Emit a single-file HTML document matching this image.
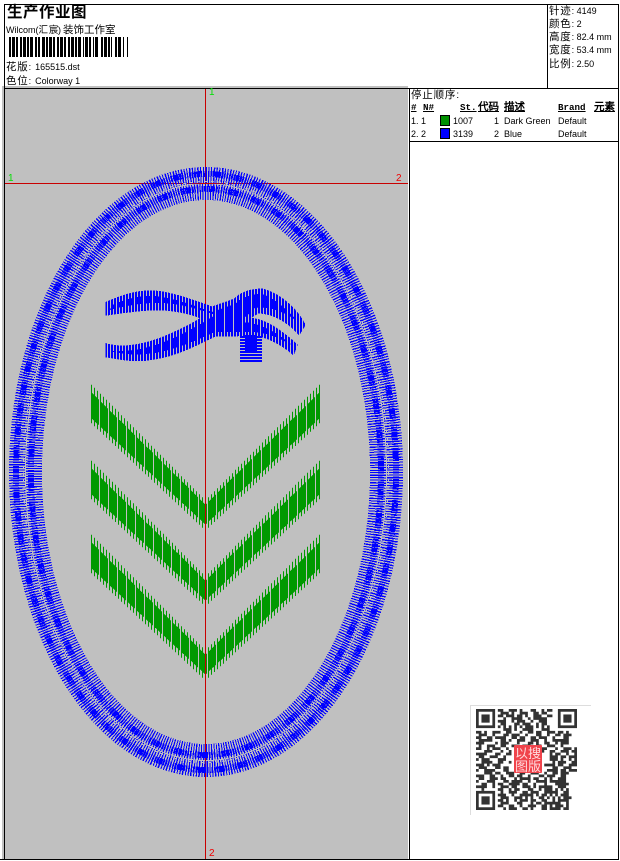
<!DOCTYPE html>
<html><head><meta charset="utf-8"><style>
html,body{margin:0;padding:0;background:#fff;width:620px;height:861px;overflow:hidden}
body{position:relative;font-family:"Liberation Sans","WenQuanYi Zen Hei","Noto Sans CJK SC",sans-serif;font-size:9px;color:#000}
.a{position:absolute;white-space:pre;line-height:12px}
.k{position:absolute;background:#000}
.c{font-size:10.5px;letter-spacing:.8px}
.h{position:absolute;white-space:pre;line-height:12px;font-family:"Liberation Mono","WenQuanYi Zen Hei",monospace;font-weight:bold;font-size:9.2px;text-decoration:underline;top:102px}
</style></head><body>
<div style="position:absolute;left:2px;top:86px;width:406px;height:773px;background:#c0c0c0"></div>
<div class="k" style="left:4px;top:4px;width:615px;height:1px"></div>
<div class="k" style="left:4px;top:4px;width:1px;height:856px"></div>
<div class="k" style="left:618px;top:4px;width:1px;height:856px"></div>
<div class="k" style="left:0;top:859px;width:619px;height:1px"></div>
<div class="k" style="left:4px;top:88px;width:615px;height:1px"></div>
<div class="k" style="left:547px;top:4px;width:1px;height:85px"></div>
<div class="k" style="left:409px;top:88px;width:1px;height:772px"></div>
<div class="k" style="left:409px;top:141px;width:210px;height:1px"></div>

<div class="a" style="left:7px;top:2px;font-size:15.5px;font-weight:bold;line-height:18px;letter-spacing:.5px;font-family:'Noto Sans CJK SC',sans-serif">生产作业图</div>
<div class="a" style="left:6px;top:24px">Wilcom(<span style="font-size:9.5px;letter-spacing:-.3px">汇</span><span style="font-size:4px"> </span><span style="font-size:9.5px;letter-spacing:-.3px">宸</span>)</div>
<div class="a" style="left:63px;top:24px;font-size:10.5px">装饰工作室</div>
<svg style="position:absolute;left:0;top:0" width="140" height="60" shape-rendering="crispEdges"><line x1="9" y1="47" x2="130" y2="47" stroke="#000" stroke-width="20" stroke-dasharray="2 1 3 1 2 2 2 1 3 1 2 1 3 2 2 1 2 2 3 1 2 1 3 1 2 2 2 1 3 1 2 2 2 1 3 1 2 1 3 2 1 1 3 1 2 2 1 1 3 3 2 1 3 1 2 1 1 3 2 1 3"/></svg>
<div class="a" style="left:6px;top:61px"><span class="c">花版</span>:<span style="margin-left:4px">165515.dst</span></div>
<div class="a" style="left:6px;top:75px"><span class="c">色位</span>:<span style="margin-left:4px">Colorway 1</span></div>

<div class="a" style="left:549px;top:5px"><span class="c">针迹</span>: 4149</div>
<div class="a" style="left:549px;top:18px"><span class="c">颜色</span>: 2</div>
<div class="a" style="left:549px;top:31px"><span class="c">高度</span>: 82.4 mm</div>
<div class="a" style="left:549px;top:44px"><span class="c">宽度</span>: 53.4 mm</div>
<div class="a" style="left:549px;top:58px"><span class="c">比例</span>: 2.50</div>

<div class="a c" style="left:411px;top:89px">停止顺序:</div>
<div class="h" style="left:411px">#</div>
<div class="h" style="left:423px">N#</div>
<div class="h" style="left:460px">St.</div>
<div class="h" style="left:478px;font-size:10.5px">代码</div>
<div class="h" style="left:504px;font-size:10.5px">描述</div>
<div class="h" style="left:558px">Brand</div>
<div class="h" style="left:594px;font-size:10.5px">元素</div>
<div class="a" style="left:411px;top:115px">1. 1</div>
<div class="a" style="left:411px;top:128px">2. 2</div>
<div style="position:absolute;left:440px;top:115px;width:8px;height:9px;background:#009000;border:1px solid #000"></div>
<div style="position:absolute;left:440px;top:128px;width:8px;height:9px;background:#0000ff;border:1px solid #000"></div>
<div class="a" style="left:453px;top:115px">1007</div>
<div class="a" style="left:453px;top:128px">3139</div>
<div class="a" style="left:494px;top:115px">1</div>
<div class="a" style="left:494px;top:128px">2</div>
<div class="a" style="left:504px;top:115px">Dark Green</div>
<div class="a" style="left:504px;top:128px">Blue</div>
<div class="a" style="left:558px;top:115px">Default</div>
<div class="a" style="left:558px;top:128px">Default</div>

<svg style="position:absolute;left:0;top:0" width="620" height="861" shape-rendering="crispEdges">
<defs>
<pattern id="g0" width="3" height="8" patternUnits="userSpaceOnUse" x="91"><rect width="1" height="8" fill="#009900"/></pattern>
<pattern id="g2" width="9" height="8" patternUnits="userSpaceOnUse" x="91"><rect width="8" height="8" fill="#009900"/></pattern>
<pattern id="b1" width="3" height="8" patternUnits="userSpaceOnUse"><rect width="2" height="8" fill="#0000ff"/></pattern>
<pattern id="b2" width="9" height="8" patternUnits="userSpaceOnUse"><rect width="7" height="8" fill="#0000ff"/></pattern>
<pattern id="b3" width="8" height="3" patternUnits="userSpaceOnUse"><rect width="8" height="2" fill="#0000ff"/></pattern>
<g id="chev">
<path fill="url(#g0)" d="M91 384L205 500V530L91 423ZM320 384L206 500V530L320 423Z"/>
<path fill="url(#g2)" d="M91 392L205 504V524L91 418ZM320 392L206 504V524L320 418Z"/>
</g>
</defs>
<line x1="205.5" y1="89" x2="205.5" y2="859" stroke="#c80000"/>
<line x1="5" y1="183.5" x2="408" y2="183.5" stroke="#c80000"/>

<g fill="none" stroke="#0000ff">
<ellipse cx="206" cy="472" rx="189" ry="297" stroke-width="16" stroke-dasharray="1.1 1.5 1 1.6 1.4 1.3"/>
<ellipse cx="206" cy="472" rx="190" ry="298" stroke-width="6" stroke-dasharray="1.6 .9 1.2 1"/>
<ellipse cx="206" cy="472" rx="172" ry="280" stroke-width="16" stroke-dasharray="1 1.6 1.3 1.4 1 1.5"/>
<ellipse cx="206" cy="472" rx="175" ry="283" stroke-width="6" stroke-dasharray="1.7 .9 1.1 1.1"/>
</g>
<g fill="none" stroke="#c0c0c0" stroke-width="1">
<ellipse cx="206" cy="472" rx="182.5" ry="290.5" stroke-dasharray="3 4"/>
</g>

<path fill="url(#b1)" stroke="url(#b1)" stroke-width="3" d="M107 303C125 295 140 291 155 292C175 294 195 302 212 308L235 300C240 294 250 290 262 290C280 294 298 312 304 325L299 333C285 318 270 312 258 312L245 320C262 316 285 335 296 345L293 353C280 342 265 335 255 335H215C195 345 175 355 155 358C135 362 120 358 107 356V345C125 350 150 345 175 333C190 326 200 320 203 318C190 312 170 308 150 309C135 310 120 312 107 314Z"/>
<path fill="url(#b2)" d="M112 305C130 297 145 295 155 296C175 298 195 306 212 312L235 304C240 298 250 294 262 294C275 298 290 312 298 322C285 312 270 306 255 308L240 322C262 322 280 335 292 345C275 336 265 332 250 332H215C195 341 175 350 155 353C135 356 120 354 110 351C130 352 150 349 178 336C190 330 205 322 215 315C190 306 170 302 150 303C135 304 120 307 110 310Z"/>
<rect x="238" y="336" width="24" height="26" fill="#c0c0c0"/>
<rect x="240" y="335" width="22" height="27" fill="url(#b3)"/>
<rect x="245" y="335" width="12" height="18" fill="#0000ff"/>

<use href="#chev"/>
<use href="#chev" y="76"/>
<use href="#chev" y="150"/>
</svg>

<div class="a" style="left:209px;top:87px;color:#00e000;font-size:10px">1</div>
<div class="a" style="left:8px;top:173px;color:#00e000;font-size:10px">1</div>
<div class="a" style="left:396px;top:173px;color:#f00000;font-size:10px">2</div>
<div class="a" style="left:209px;top:848px;color:#f00000;font-size:10px">2</div>

<div style="position:absolute;left:470px;top:705px;width:120px;height:109px;background:#fff;border-left:1px solid #ddd;border-top:1px solid #ddd"></div>
<svg style="position:absolute;left:475.7px;top:709px" width="101" height="101" viewBox="0 0 37 37">
<g fill="none" stroke="#333" stroke-width="1">
<rect x=".5" y=".5" width="6" height="6"/><rect x="30.5" y=".5" width="6" height="6"/><rect x=".5" y="30.5" width="6" height="6"/>
<path d="M8 .5h2m2 0h3m1 0h1m3 0h2m2 0h1m1 0h2
M9 1.5h3m1 0h1m2 0h3m2 0h2m1 0h2
M8 2.5h1m2 0h3m2 0h1m1 0h1m2 0h3m2 0h2
M10 3.5h1m2 0h4m2 0h1m1 0h2m1 0h2
M8 4.5h3m2 0h1m2 0h2m2 0h1m2 0h3
M9 5.5h2m3 0h2m1 0h3m2 0h1m1 0h2
M8 6.5h1m1 0h1m1 0h1m1 0h1m1 0h1m1 0h1m1 0h1m1 0h1m1 0h1m1 0h1
M10 7.5h2m2 0h1m2 0h4m3 0h2
M0 8.5h2m1 0h1m2 0h3m2 0h2m3 0h1m2 0h2m1 0h2m2 0h3m1 0h2m1 0h1
M1 9.5h3m2 0h1m3 0h2m1 0h3m2 0h1m3 0h2m2 0h1m2 0h2m1 0h3
M0 10.5h1m3 0h2m1 0h3m3 0h2m1 0h2m2 0h2m1 0h3m2 0h1m3 0h2
M2 11.5h4m3 0h1m2 0h1m2 0h3m2 0h3m2 0h1m2 0h3m1 0h2
M0 12.5h3m4 0h1m1 0h3m3 0h1m3 0h2m1 0h1m2 0h2m2 0h1m1 0h3
M1 13.5h1m2 0h3m2 0h2m2 0h2m2 0h3m2 0h2m2 0h3m2 0h1
M0 14.5h2m2 0h1m1 0h3m2 0h1m13 0h1m3 0h1m2 0h3m1 0h1
M3 15.5h3m3 0h1m2 0h1m14 0h2m2 0h3m1 0h3
M0 16.5h4m3 0h2m2 0h2m14 0h1m1 0h2m2 0h1m2 0h2
M1 17.5h2m2 0h3m2 0h1m16 0h3m1 0h2m1 0h3
M0 18.5h1m2 0h2m3 0h3m16 0h2m2 0h1m2 0h1m1 0h2
M2 19.5h4m2 0h2m2 0h1m15 0h1m1 0h3m2 0h3
M0 20.5h2m2 0h1m1 0h3m14 0h1m1 0h3m2 0h2m2 0h3
M1 21.5h3m3 0h2m1 0h1m17 0h2m2 0h3m2 0h1
M0 22.5h1m2 0h4m3 0h1m15 0h4m1 0h1m2 0h3
M3 23.5h2m2 0h2m2 0h3m2 0h2m2 0h3m2 0h1m2 0h2m1 0h3
M0 24.5h3m3 0h1m2 0h1m2 0h2m1 0h2m2 0h1m3 0h2m1 0h3m2 0h2
M1 25.5h2m2 0h3m1 0h2m3 0h1m1 0h4m1 0h2m2 0h1m1 0h1m2 0h3
M0 26.5h1m3 0h3m3 0h2m2 0h3m2 0h1m2 0h4m1 0h3m1 0h2
M2 27.5h2m2 0h1m1 0h2m2 0h1m1 0h2m1 0h2m2 0h1m3 0h1m3 0h1m1 0h3
M0 28.5h4m2 0h1m2 0h3m2 0h1m2 0h3m1 0h1m1 0h5m2 0h3
M8 29.5h2m2 0h1m1 0h2m3 0h2m2 0h1m1 0h1m3 0h1m1 0h1m1 0h1
M9 30.5h1m2 0h3m2 0h1m2 0h3m2 0h5m2 0h2
M8 31.5h3m2 0h1m2 0h2m1 0h2m1 0h1m2 0h1m3 0h1m1 0h3
M10 32.5h2m2 0h3m3 0h1m2 0h2m1 0h1m1 0h1m1 0h1m2 0h2
M8 33.5h1m2 0h1m2 0h1m1 0h3m1 0h2m2 0h1m3 0h1m2 0h3
M9 34.5h3m3 0h2m3 0h1m1 0h2m1 0h5m3 0h1
M8 35.5h2m2 0h2m2 0h1m2 0h3m2 0h1m2 0h1m1 0h3m1 0h1
M10 36.5h1m1 0h3m2 0h2m1 0h1m3 0h2m1 0h3m2 0h2
M9.5 0v3m3 3v2m3-6v3m4 1v3m4-6v2m3 2v3
M1.5 9v3m3 1v3m-2 2v3m3 1v3m-3 2v3m29-19v3m-2 2v3m3 2v3m-2 2v3m2 1v3m-4-15v4m-2 6v3m-1 2v3
M9.5 31v3m4 2v1m3-6v3m4 1v3m4-7v3m3 1v3m3-5v4m3-3v2
M10.5 10v3m4 1v2m-3 5v3m2 2v3m6-17v2m5 0v2m-6 14v3m6-2v2m3-4v3"/>
</g>
<g fill="#333"><rect x="2" y="2" width="3" height="3"/><rect x="32" y="2" width="3" height="3"/><rect x="2" y="32" width="3" height="3"/></g>
</svg>
<div style="position:absolute;left:514px;top:745px;width:28px;height:28px;background:#f0434b;border-radius:1px"></div>
<div class="a" style="left:515px;top:746px;font-size:13px;line-height:13px;color:#ffd9dc;white-space:normal;width:13px;font-family:'Noto Sans CJK SC',sans-serif">以图</div>
<div class="a" style="left:528px;top:746px;font-size:13px;line-height:13px;color:#ffd9dc;white-space:normal;width:13px;font-family:'Noto Sans CJK SC',sans-serif">搜版</div>
</body></html>
